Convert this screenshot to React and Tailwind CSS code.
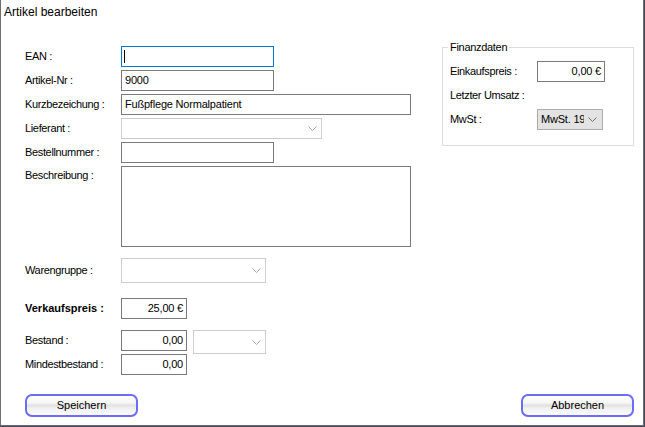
import React from "react";

const lbl = "text-[11px] tracking-[-0.35px] leading-none text-black";
const box = "h-[21px] border border-[#7a7a7a] bg-white flex items-center px-[3px] text-[11px] tracking-[-0.2px] leading-none";

function Chevron({ color = "#a8a8a8" }) {
  return (
    <svg width="9" height="5" viewBox="0 0 9 5" className="shrink-0">
      <polyline points="0.5,0.5 4.5,4.5 8.5,0.5" fill="none" stroke={color} strokeWidth="1" />
    </svg>
  );
}

function Combo({ w, h = "h-[21px]" }) {
  return (
    <div className={`${w} ${h} border border-[#cccccc] bg-white flex items-center justify-end pr-[4px]`}>
      <Chevron />
    </div>
  );
}

function Row({ label, children, className = "", bold = false }) {
  return (
    <div className={`flex items-start ${className}`}>
      <div className={`w-[96px] h-[21px] flex items-center ${bold ? "text-[11px] font-bold leading-none" : lbl}`}>{label}</div>
      {children}
    </div>
  );
}

function Btn({ children }) {
  return (
    <div className="w-[113px] h-[23px] rounded-[7px] border-2 border-[#6c6cf4] bg-[linear-gradient(to_bottom,#ffffff_0%,#f6f6f6_35%,#e2e2e2_50%,#efefef_62%,#fbfbfb_100%)] flex items-center justify-center text-[11px] leading-none text-black">
      {children}
    </div>
  );
}

export default function App() {
  return (
    <div className="w-[645px] h-[427px] bg-[#48455f] font-['Liberation_Sans',Arial,sans-serif] text-black">
      <div className="w-[644px] h-[426px] bg-white border-l border-r border-b border-[#6e6e6e] flex flex-col">
        <div className="h-[24px] pl-[3px] flex items-center text-[12px] leading-none">Artikel bearbeiten</div>
        <div className="flex">
          <div className="pl-[24px] pt-[22px] w-[410px] flex flex-col">
            <Row label="EAN :">
              <div className="w-[153px] h-[21px] border border-[#0078d7] bg-white flex items-center px-[2px]">
                <span className="w-px h-[13px] bg-black" />
              </div>
            </Row>
            <Row label="Artikel-Nr :" className="mt-[3px]">
              <div className={`${box} w-[153px]`}>9000</div>
            </Row>
            <Row label="Kurzbezeichung :" className="mt-[3px]">
              <div className={`${box} w-[290px]`}>Fußpflege Normalpatient</div>
            </Row>
            <Row label="Lieferant :" className="mt-[3px]">
              <Combo w="w-[201px]" />
            </Row>
            <Row label="Bestellnummer :" className="mt-[3px]">
              <div className={`${box} w-[153px]`} />
            </Row>
            <div className="flex items-start mt-[3px]">
              <div className={`w-[96px] pt-[4px] ${lbl}`}>Beschreibung :</div>
              <div className="w-[290px] h-[81px] border border-[#7a7a7a] bg-white" />
            </div>
            <div className="flex items-center mt-[11px]">
              <div className={`w-[96px] ${lbl}`}>Warengruppe :</div>
              <Combo w="w-[145px]" h="h-[25px]" />
            </div>
            <Row label="Verkaufspreis :" bold className="mt-[15px]">
              <div className={`${box} w-[66px] justify-end`}>25,00 €</div>
            </Row>
            <Row label="Bestand :" className="mt-[11px]">
              <div className={`${box} w-[66px] justify-end`}>0,00</div>
              <div className="ml-[6px]">
                <Combo w="w-[73px]" h="h-[24px]" />
              </div>
            </Row>
            <Row label="Mindestbestand :">
              <div className={`${box} w-[66px] justify-end`}>0,00</div>
            </Row>
          </div>
          <fieldset className="ml-[31px] mt-[17px] w-[192px] h-[105px] border border-[#dcdcdc]">
            <legend className="ml-[5px] px-[2px] text-[11px] tracking-[-0.3px] leading-[13px]">Finanzdaten</legend>
            <div className="pl-[7px] pt-[7px] flex flex-col gap-[3px]">
              <div className="flex items-center">
                <div className={`w-[87px] ${lbl}`}>Einkaufspreis :</div>
                <div className={`${box} w-[68px] justify-end`}>0,00 €</div>
              </div>
              <div className="flex items-center h-[21px]">
                <div className={lbl}>Letzter Umsatz :</div>
              </div>
              <div className="flex items-center">
                <div className={`w-[87px] ${lbl}`}>MwSt :</div>
                <div className="w-[66px] h-[21px] border border-[#adadad] bg-[#e3e3e3] flex items-center pl-[3px] pr-[5px]">
                  <div className="w-[43px] overflow-hidden whitespace-nowrap text-[11px] tracking-[-0.2px] leading-none">MwSt. 19%</div>
                  <div className="ml-auto"><Chevron color="#707070" /></div>
                </div>
              </div>
            </div>
          </fieldset>
        </div>
        <div className="mt-auto pb-[8px] pl-[24px] pr-[9px] flex justify-between">
          <Btn>Speichern</Btn>
          <Btn>Abbrechen</Btn>
        </div>
      </div>
    </div>
  );
}
